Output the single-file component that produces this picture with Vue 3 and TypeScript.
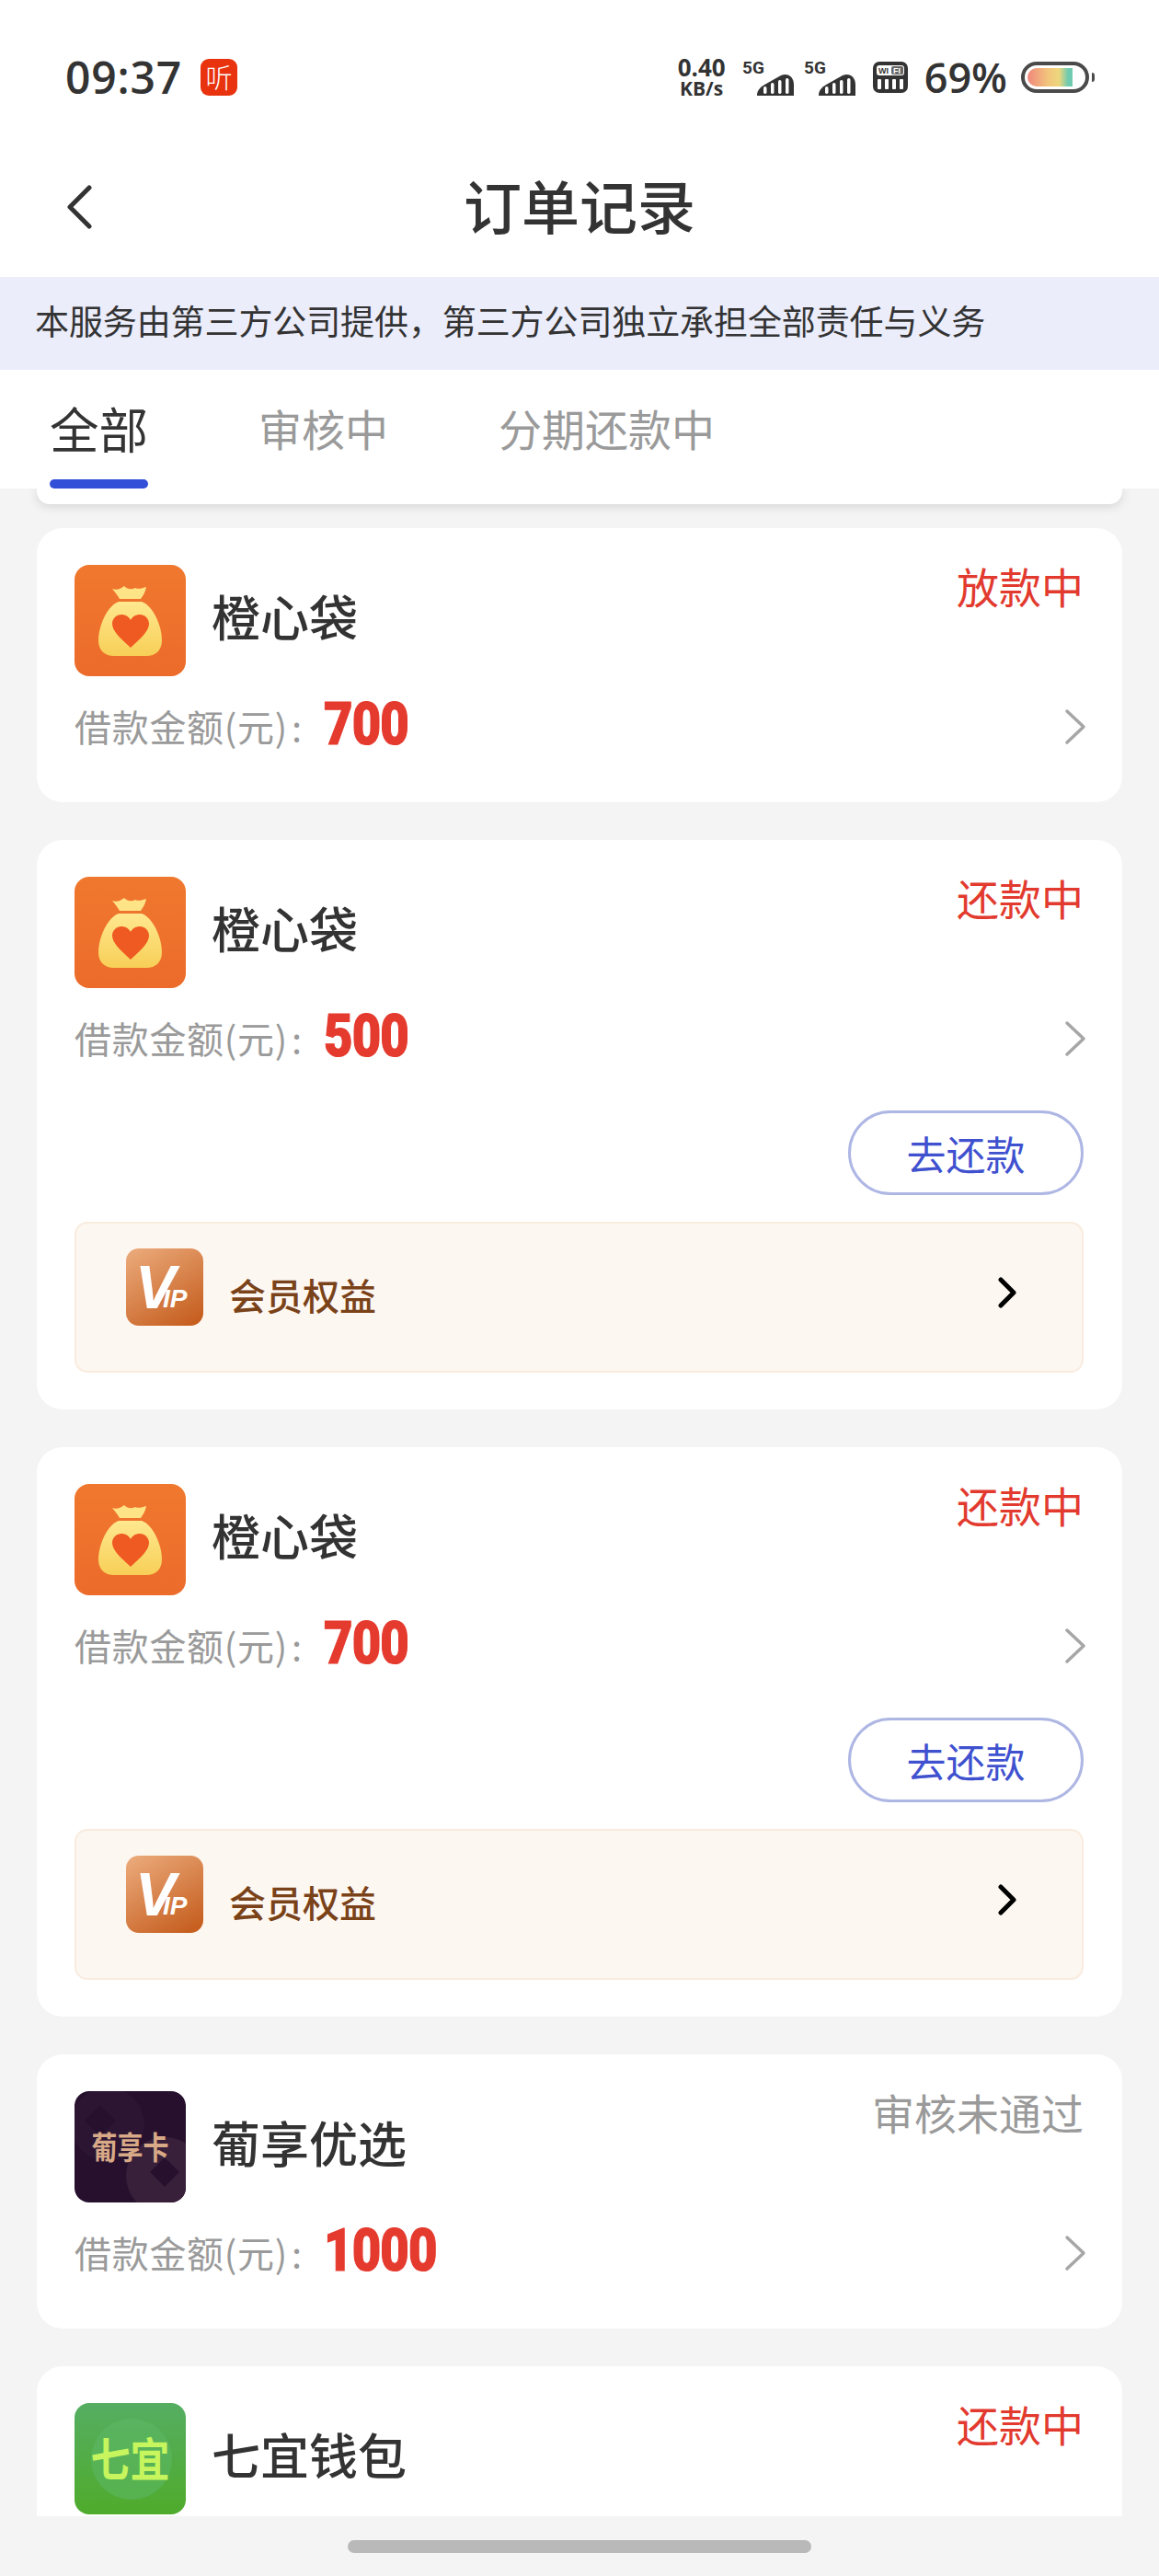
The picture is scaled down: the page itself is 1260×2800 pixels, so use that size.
<template>
  <div class="page">
    <div class="status-bar">
      <span class="time">09:37</span>
      <span class="listen-badge">听</span>
      <div class="status-right">
        <div class="speed">
          <span class="speed-num">0.40</span>
          <span class="speed-unit">KB/s</span>
        </div>
        <svg v-for="n in 2" :key="n" class="signal" viewBox="0 0 56 40">
          <text x="0" y="16" class="signal-text">5G</text>
          <path d="M16 40C16 34 20 30 26 27L42 18C50 15 56 20 56 28V40Z" fill="#333" />
          <rect x="23" y="30" width="3.5" height="8" rx="1.7" fill="#fff" />
          <rect x="31" y="26" width="3.5" height="12" rx="1.7" fill="#fff" />
          <rect x="39" y="23" width="3.5" height="15" rx="1.7" fill="#fff" />
          <rect x="47" y="21" width="3.5" height="17" rx="1.7" fill="#fff" />
        </svg>
        <svg class="wifi" viewBox="0 0 38 34">
          <rect width="38" height="34" rx="7" fill="#333" />
          <rect x="4" y="4" width="30" height="11" rx="3" fill="#fff" />
          <rect x="20" y="5" width="13" height="9" rx="2" fill="#666" />
          <text x="6" y="13" class="wifi-text">WI</text>
          <text x="22" y="13" class="wifi-text wifi-text-light">FI</text>
          <rect x="5" y="19" width="4" height="11" rx="1" fill="#fff" />
          <rect x="13" y="19" width="4" height="11" rx="1" fill="#fff" />
          <rect x="21" y="19" width="4" height="11" rx="1" fill="#fff" />
          <rect x="29" y="19" width="4" height="11" rx="1" fill="#fff" />
        </svg>
        <span class="percent">69%</span>
        <div class="battery">
          <div class="battery-body"><div class="battery-fill"></div></div>
          <div class="battery-cap"></div>
        </div>
      </div>
    </div>

    <div class="nav">
      <svg class="back" viewBox="0 0 28 48">
        <path d="M25 3L4 24L25 45" fill="none" stroke="#333" stroke-width="5" stroke-linecap="round" stroke-linejoin="round" />
      </svg>
      <h1 class="title">订单记录</h1>
    </div>

    <div class="notice">本服务由第三方公司提供，第三方公司独立承担全部责任与义务</div>

    <div class="tabs">
      <div
        v-for="(t, i) in tabs"
        :key="t"
        class="tab"
        :class="{ active: i === 0 }"
      >{{ t }}</div>
    </div>
    <div class="tabs-lip"></div>

    <div class="list">
      <div v-for="o in orders" :key="o.id" class="card">
        <div class="card-head">
          <svg v-if="o.logo === 'bag'" class="logo" viewBox="0 0 121 121">
            <defs>
              <linearGradient id="bagBg" x1="0" y1="0" x2="0" y2="1">
                <stop offset="0" stop-color="#f0782e" />
                <stop offset="1" stop-color="#ec6b2b" />
              </linearGradient>
              <linearGradient id="bagBody" x1="0" y1="0" x2="0" y2="1">
                <stop offset="0" stop-color="#ffe88f" />
                <stop offset="1" stop-color="#f7cf57" />
              </linearGradient>
            </defs>
            <rect width="121" height="121" fill="url(#bagBg)" />
            <path d="M41 26C46 28 50 26 54 23C58 27 62 27 66 25C70 27 74 25 78 24C77 30 74 34 72 37H49C47 33 44 30 41 26Z" fill="#ffe387" />
            <path d="M48 40C36 44 26 66 26 82C26 93 33 99 43 99H78C88 99 95 93 95 82C95 66 85 44 73 40Z" fill="url(#bagBody)" />
            <path d="M61 90C50 80 41 72 41 64C41 58 46 54 51 54C55 54 59 56 61 60C63 56 67 54 71 54C76 54 81 58 81 64C81 72 72 80 61 90Z" fill="#ef5a22" />
          </svg>
          <svg v-else-if="o.logo === 'card'" class="logo" viewBox="0 0 121 121">
            <rect width="121" height="121" fill="#26102e" />
            <circle cx="36" cy="36" r="40" fill="#2c1533" />
            <circle cx="98" cy="92" r="42" fill="#38203a" />
            <path d="M28 15L45 32L28 49L11 32Z" fill="#26102e" />
            <path d="M98 72L114 88L98 104L82 88Z" fill="#26102e" />
            <text transform="translate(60.5 74) scale(1 1.2)" text-anchor="middle" class="logo-card-text">葡享卡</text>
          </svg>
          <svg v-else class="logo" viewBox="0 0 121 121">
            <defs>
              <linearGradient id="qyBg" x1="0" y1="0" x2="0" y2="1">
                <stop offset="0" stop-color="#55ae62" />
                <stop offset="1" stop-color="#4fab2b" />
              </linearGradient>
            </defs>
            <rect width="121" height="121" fill="url(#qyBg)" />
            <circle cx="62" cy="61" r="44" fill="#5cb866" opacity="0.55" />
            <text transform="translate(60.5 80) scale(1 1.15)" text-anchor="middle" class="logo-qy-text">七宜</text>
          </svg>
          <span class="name">{{ o.name }}</span>
          <span class="state" :class="{ rejected: o.rejected }">{{ o.state }}</span>
        </div>

        <div class="amount-row">
          <span class="amount-label">借款金额(元)<span class="colon">:</span></span>
          <span class="amount">{{ o.amount }}</span>
          <svg class="row-arrow" viewBox="0 0 26 40">
            <path d="M4 3L22 20L4 37" fill="none" stroke="#a6a6a6" stroke-width="3.5" stroke-linecap="round" stroke-linejoin="round" />
          </svg>
        </div>

        <template v-if="o.repay">
          <div class="actions">
            <button class="repay-btn">去还款</button>
          </div>
          <div class="vip">
            <svg class="vip-icon" viewBox="0 0 84 84">
              <defs>
                <linearGradient id="vipBg" x1="0.2" y1="0" x2="0.8" y2="1">
                  <stop offset="0" stop-color="#e9a676" />
                  <stop offset="1" stop-color="#c65f20" />
                </linearGradient>
              </defs>
              <rect width="84" height="84" rx="14" fill="url(#vipBg)" />
              <text x="10" y="65" class="vip-v">V</text>
              <text x="40" y="64" class="vip-ip">IP</text>
            </svg>
            <span class="vip-text">会员权益</span>
            <svg class="vip-arrow" viewBox="0 0 20 34">
              <path d="M3 3L17 17L3 31" fill="none" stroke="#000" stroke-width="5" stroke-linecap="round" stroke-linejoin="round" />
            </svg>
          </div>
        </template>
      </div>
    </div>

    <div class="home-area">
      <div class="home-pill"></div>
    </div>
  </div>
</template>

<script setup lang="ts">
interface Order {
  id: number
  logo: 'bag' | 'card' | 'qiyi'
  name: string
  state: string
  amount: number
  repay?: boolean
  rejected?: boolean
}

const tabs = ['全部', '审核中', '分期还款中']

const orders: Order[] = [
  { id: 1, logo: 'bag', name: '橙心袋', state: '放款中', amount: 700 },
  { id: 2, logo: 'bag', name: '橙心袋', state: '还款中', amount: 500, repay: true },
  { id: 3, logo: 'bag', name: '橙心袋', state: '还款中', amount: 700, repay: true },
  { id: 4, logo: 'card', name: '葡享优选', state: '审核未通过', amount: 1000, rejected: true },
  { id: 5, logo: 'qiyi', name: '七宜钱包', state: '还款中', amount: 800 }
]
</script>

<style>
body { margin: 0; background: #f4f4f4; }
</style>

<style scoped>
.page {
  width: 1260px; height: 2800px;
  display: flex; flex-direction: column;
  overflow: hidden; background: #f4f4f4;
  font-family: "Noto Sans CJK SC", "Noto Sans", sans-serif;
  color: #333;
}

.status-bar {
  height: 151px; flex: none; background: #fff;
  display: flex; align-items: center;
  padding: 16px 70px 0 71px; box-sizing: border-box;
}
.time {
  font-family: "Open Sans", sans-serif; font-size: 48px; font-weight: 600;
  letter-spacing: 0.8px; color: #333; line-height: 1;
}
.listen-badge {
  width: 40px; height: 40px; margin-left: 20px; border-radius: 9px;
  background: #e8330e; color: #fff; font-size: 29px; line-height: 38px;
  text-align: center; font-weight: 300;
}
.status-right { margin-left: auto; display: flex; align-items: center; }
.speed {
  display: flex; flex-direction: column; align-items: center; width: 54px;
  font-family: "Open Sans", sans-serif; font-weight: 700; color: #333;
}
.speed-num { font-size: 26px; line-height: 24px; }
.speed-unit { font-size: 21px; line-height: 22px; }
.signal { width: 56px; height: 40px; margin-left: 17px; margin-top: 1px; }
.signal + .signal { margin-left: 11px; }
.signal-text { font-family: "Roboto", sans-serif; font-size: 19px; font-weight: 700; fill: #333; }
.wifi { width: 38px; height: 34px; margin-left: 19px; }
.wifi-text { font-family: "Liberation Sans", sans-serif; font-size: 9px; font-weight: 700; fill: #333; }
.wifi-text-light { fill: #fff; }
.percent {
  font-family: "Open Sans", sans-serif; font-size: 45px; font-weight: 600;
  margin-left: 18px; color: #333; line-height: 1;
}
.battery { display: flex; align-items: center; margin-left: 15px; }
.battery-body {
  width: 74px; height: 34px; box-sizing: border-box;
  border: 4px solid #4a4a4a; border-radius: 17px;
  padding: 3px 14px 3px 3px; overflow: hidden;
}
.battery-fill {
  height: 100%; border-radius: 10px 0 0 10px;
  background: linear-gradient(90deg, #f0877c 0%, #f2c47c 45%, #eed77d 70%, #6fcbb0 90%);
}
.battery-cap { width: 3px; height: 10px; margin-left: 3px; background: #4a4a4a; border-radius: 0 3px 3px 0; }

.nav {
  height: 150px; flex: none; background: #fff; position: relative;
  display: flex; align-items: center; justify-content: center;
  padding-bottom: 10px; box-sizing: border-box;
}
.back { position: absolute; left: 72px; top: 50px; width: 28px; height: 48px; }
.title { margin: 0; font-size: 63px; font-weight: 500; color: #333; line-height: 1; }

.notice {
  height: 101px; flex: none; box-sizing: border-box;
  padding-left: 38px; line-height: 95px;
  background: #ebedfb; color: #333; font-size: 37px; letter-spacing: -0.1px; white-space: nowrap;
}

.tabs {
  height: 129px; flex: none; background: #fff;
  display: flex; padding-left: 54px; gap: 120px;
  position: relative; z-index: 2;
}
.tab { font-size: 47px; color: #9a9a9a; line-height: 125px; height: 129px; position: relative; }
.tab.active { font-size: 53.5px; color: #333; }
.tab.active::after {
  content: ""; position: absolute; left: 0; right: 0; bottom: 0;
  height: 10px; border-radius: 5px; background: #3350d8;
}
.tabs-lip {
  height: 17px; flex: none; margin: 0 40px;
  background: #fff; border-radius: 0 0 14px 14px;
  box-shadow: 0 2px 12px rgba(0, 0, 0, 0.14);
  position: relative; z-index: 1;
}

.list {
  flex: 1; min-height: 0; overflow: hidden;
  padding: 26px 40px 0;
  display: flex; flex-direction: column; gap: 41px;
}
.card {
  flex: none; background: #fff; border-radius: 28px;
  padding: 40px 42px 40px 41px;
}
.card-head { display: flex; align-items: flex-start; }
.logo { width: 121px; height: 121px; flex: none; display: block; border-radius: 16px; }
.logo-card-text { font-size: 28px; font-weight: 700; fill: #d8a987; }
.logo-qy-text { font-size: 43px; font-weight: 700; fill: #c6f55e; }
.name {
  margin-left: 28px; font-size: 53px; line-height: 111px; color: #333; font-weight: 500;
}
.state { margin-left: auto; font-size: 46px; line-height: 44px; color: #e23a2e; }
.state.rejected { color: #9a9a9a; }

.amount-row { display: flex; align-items: center; height: 64px; margin-top: 22px; margin-bottom: 11px; }
.amount-label { font-size: 40px; color: #9a9a9a; letter-spacing: 0.7px; }
.colon { margin-left: 4px; }
.amount {
  font-family: "Roboto", sans-serif; font-size: 64px; font-weight: 900;
  letter-spacing: -1px; color: #e53a2e; margin-left: 23px; line-height: 1; margin-top: -2px;
  -webkit-text-stroke: 1.2px #e53a2e;
  display: inline-block; transform: scaleX(0.85); transform-origin: left center;
}
.row-arrow { width: 26px; height: 40px; margin-left: auto; margin-right: -4px; margin-top: 2px; }

.actions { display: flex; justify-content: flex-end; margin-top: 47px; }
.repay-btn {
  width: 256px; height: 92px; box-sizing: border-box;
  border: 3px solid #aeb6e4; border-radius: 46px; background: #fff;
  color: #3f51cf; font-size: 43px; font-family: inherit; padding: 0; line-height: 1;
}

.vip {
  margin-top: 29px; height: 164px; box-sizing: border-box;
  display: flex; align-items: flex-start;
  background: #fdf7f1; border: 2px solid #f9ecdf; border-radius: 14px;
  padding: 27px 71px 0 54px;
}
.vip-icon { width: 84px; height: 84px; flex: none; display: block; }
.vip-v { font-family: "Liberation Sans", sans-serif; font-size: 66px; font-weight: 700; font-style: italic; fill: #fff; }
.vip-ip { font-family: "Liberation Sans", sans-serif; font-size: 28px; font-weight: 700; font-style: italic; fill: #fff; }
.vip-text { margin-left: 28px; font-size: 40px; font-weight: 500; color: #7a4219; line-height: 100px; }
.vip-arrow { width: 20px; height: 34px; margin-left: auto; margin-top: 31px; }

.home-area {
  height: 65px; flex: none; background: #f4f4f4; position: relative; z-index: 2;
  display: flex; justify-content: center; padding-top: 26px; box-sizing: border-box;
}
.home-pill { width: 504px; height: 14px; border-radius: 7px; background: #b9b9b9; }
</style>
